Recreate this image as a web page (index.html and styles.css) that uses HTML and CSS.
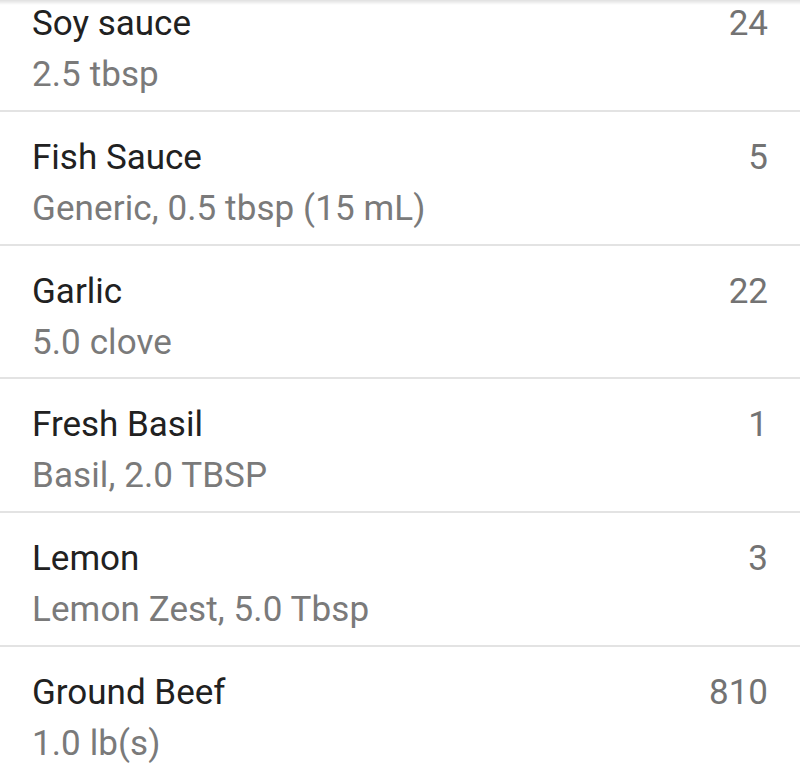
FILE: index.html
```html
<!DOCTYPE html>
<html>
<head>
<meta charset="utf-8">
<link rel="stylesheet" href="styles.css">
</head>
<body>
<div class="shadow"></div>
<ul class="list">
  <li class="row"><div class="info"><div class="name">Soy sauce</div><div class="detail">2.5 tbsp</div></div><div class="value">24</div></li>
  <li class="row"><div class="info"><div class="name">Fish Sauce</div><div class="detail">Generic, 0.5 tbsp (15 mL)</div></div><div class="value">5</div></li>
  <li class="row"><div class="info"><div class="name">Garlic</div><div class="detail">5.0 clove</div></div><div class="value">22</div></li>
  <li class="row"><div class="info"><div class="name">Fresh Basil</div><div class="detail">Basil, 2.0 TBSP</div></div><div class="value">1</div></li>
  <li class="row"><div class="info"><div class="name">Lemon</div><div class="detail">Lemon Zest, 5.0 Tbsp</div></div><div class="value">3</div></li>
  <li class="row"><div class="info"><div class="name">Ground Beef</div><div class="detail">1.0 lb(s)</div></div><div class="value">810</div></li>
</ul>
</body>
</html>
```

FILE: styles.css
```css
html, body {
  margin: 0;
  padding: 0;
  background: #ffffff;
  overflow: hidden;
}
body {
  font-family: Roboto, "Liberation Sans", sans-serif;
}
.shadow {
  position: fixed;
  top: 0;
  left: 0;
  right: 0;
  height: 5px;
  background: linear-gradient(to bottom, rgba(0,0,0,0.12), rgba(0,0,0,0));
  z-index: 2;
}
.list {
  list-style: none;
  margin: -22px 0 0 0;
  padding: 0;
}
.row {
  box-sizing: border-box;
  height: 133.75px;
  display: flex;
  justify-content: space-between;
  align-items: flex-start;
  padding: 20px 32px 0 32px;
  border-bottom: 2px solid #e3e3e3;
}
.name {
  font-size: 35px;
  line-height: 51px;
  color: #212121;
}
.detail {
  font-size: 35px;
  line-height: 51px;
  letter-spacing: 0.1px;
  color: #7a7a7a;
}
.value {
  font-size: 35px;
  line-height: 51px;
  color: #737373;
}
```
